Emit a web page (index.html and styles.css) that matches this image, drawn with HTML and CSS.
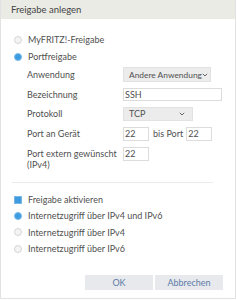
FILE: index.html
```html
<!DOCTYPE html>
<html lang="de">
<head>
<meta charset="UTF-8">
<meta name="viewport" content="width=device-width, initial-scale=1.0">
<title>Freigabe anlegen</title>
<link rel="stylesheet" href="styles.css">
</head>
<body>

<div class="dialog">
    <div class="dialog-head">Freigabe anlegen</div>

    <div class="dialog-body">
        <div class="option first"><span class="radio"></span>MyFRITZ!-Freigabe</div>
        <div class="option"><span class="radio checked"></span>Portfreigabe</div>

        <div class="form">
            <div class="row">
                <div class="label">Anwendung</div>
                <div class="select wide">
                    <span>Andere Anwendung</span>
                    <svg width="6" height="4" viewBox="0 0 6 4"><path d="M0.8 0.8 L3 3 L5.2 0.8" fill="none" stroke="#666" stroke-width="1"/></svg>
                </div>
            </div>
            <div class="row">
                <div class="label">Bezeichnung</div>
                <input class="field name" type="text" value="SSH">
            </div>
            <div class="row">
                <div class="label">Protokoll</div>
                <div class="select narrow">
                    <span>TCP</span>
                    <svg width="6" height="4" viewBox="0 0 6 4"><path d="M0.8 0.8 L3 3 L5.2 0.8" fill="none" stroke="#666" stroke-width="1"/></svg>
                </div>
            </div>
            <div class="row">
                <div class="label">Port an Gerät</div>
                <input class="field port" type="text" value="22">
                <span class="between">bis Port</span>
                <input class="field port" type="text" value="22">
            </div>
            <div class="row top">
                <div class="label">Port extern gewünscht<br>(IPv4)</div>
                <input class="field port" type="text" value="22">
            </div>
        </div>

        <div class="divider"></div>

        <div class="option small"><span class="check"></span>Freigabe aktivieren</div>
        <div class="option small"><span class="radio checked"></span>Internetzugriff über IPv4 und IPv6</div>
        <div class="option small"><span class="radio"></span>Internetzugriff über IPv4</div>
        <div class="option small"><span class="radio"></span>Internetzugriff über IPv6</div>

        <div class="buttons">
            <button>OK</button>
            <button>Abbrechen</button>
        </div>
    </div>
</div>

</body>
</html>
```

FILE: styles.css
```css
body {
    margin: 0;
    background: #fff;
    font-family: "Lato", "Liberation Sans", sans-serif;
    font-size: 9px;
    color: #505050;
}
.dialog {
    width: 236px;
    height: 299px;
    box-sizing: border-box;
    border: 1px solid #e2e2e2;
    border-top: none;
}
.dialog-head {
    height: 19px;
    line-height: 19px;
    padding-left: 10px;
    background: #ebebe5;
    color: #444;
    font-size: 9.5px;
}
.dialog-body {
    padding: 0 12px 0 12px;
}
.option {
    display: flex;
    align-items: center;
    height: 17px;
}
.option.first {
    margin-top: 12px;
}
.option.small {
    height: 16.3px;
}
.radio {
    width: 6px;
    height: 6px;
    border: 1px solid #d6d6d6;
    border-radius: 50%;
    background: #f4f4f4;
    margin: 0 6px 0 1px;
}
.radio.checked {
    background: #3d9be0;
    border-color: #7dbcea;
}
.check {
    width: 6px;
    height: 6px;
    background: #3d9be0;
    border: 1px solid #7db7e6;
    margin: 0 6px 0 1px;
}
.form {
    margin-top: 2px;
    padding-left: 14px;
}
.row {
    display: flex;
    align-items: center;
    margin-bottom: 6px;
}
.row.top {
    align-items: flex-start;
    margin-bottom: 0;
}
.row.top .label {
    line-height: 11px;
    margin-top: 1px;
}
.label {
    width: 96px;
    flex: none;
    white-space: nowrap;
}
.select {
    display: flex;
    align-items: center;
    justify-content: space-between;
    box-sizing: border-box;
    height: 15px;
    padding: 0 5px;
    background: #ececec;
    border: 1px solid #e2e2e2;
    white-space: nowrap;
}
.select svg {
    flex: none;
}
.select.wide {
    width: 88px;
    font-size: 8.4px;
}
.select.narrow {
    width: 70px;
    height: 14px;
    padding-right: 7px;
}
.field {
    box-sizing: border-box;
    height: 13px;
    padding: 0 1px;
    border: 1px solid #dcdcdc;
    font-family: "Lato", "Liberation Sans", sans-serif;
    font-size: 9px;
    color: #505050;
    background: #fff;
    outline: none;
}
.field.name {
    width: 99px;
    height: 12.5px;
}
.field.port {
    width: 26px;
    height: 14px;
}
.between {
    margin: 0 3px 0 4px;
    white-space: nowrap;
}
.divider {
    height: 1px;
    background: #ececec;
    margin: 12px 10px 9px -1px;
}
.buttons {
    display: flex;
    justify-content: flex-end;
    gap: 2px;
    margin-top: 18px;
}
button {
    width: 68px;
    height: 15px;
    padding: 0;
    border: none;
    background: #e7e9ed;
    font-family: "Lato", "Liberation Sans", sans-serif;
    font-size: 9px;
    color: #5e7ba6;
}
```
